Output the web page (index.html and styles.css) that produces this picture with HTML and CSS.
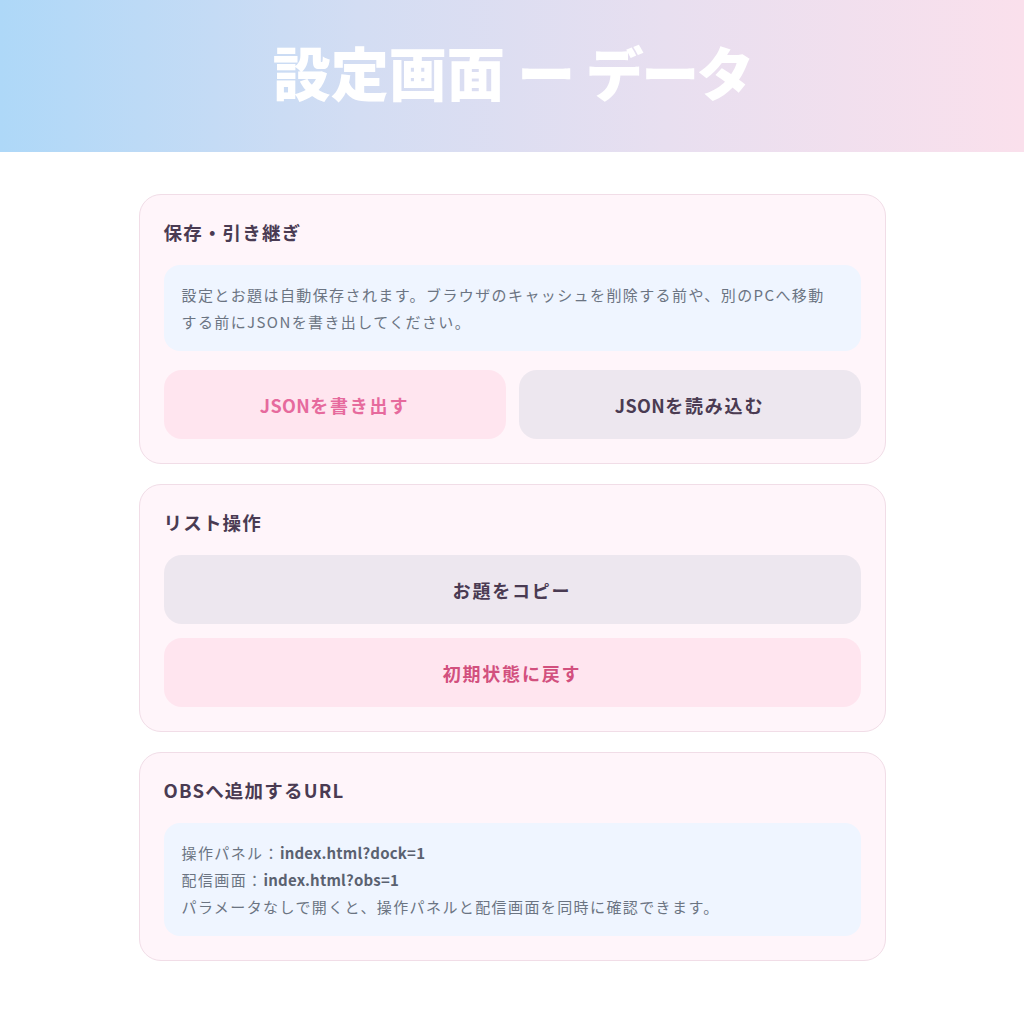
FILE: index.html
```html
<!DOCTYPE html>
<html lang="ja">
<head>
<meta charset="utf-8">
<title>設定画面 ー データ</title>
<link rel="stylesheet" href="styles.css">
</head>
<body>
<header class="hero">
  <h1 class="hero-title">設定画面 ー データ</h1>
</header>
<main class="content">
  <section class="card">
    <h2 class="card-title">保存・引き継ぎ</h2>
    <div class="info info-wrap">設定とお題は自動保存されます。ブラウザのキャッシュを削除する前や、別のPCへ移動する前にJSONを書き出してください。</div>
    <div class="btn-row">
      <button class="btn btn-pink"><span class="latin">JSON</span>を書き出す</button>
      <button class="btn btn-gray"><span class="latin">JSON</span>を読み込む</button>
    </div>
  </section>
  <section class="card">
    <h2 class="card-title">リスト操作</h2>
    <div class="btn-col">
      <button class="btn btn-gray">お題をコピー</button>
      <button class="btn btn-danger">初期状態に戻す</button>
    </div>
  </section>
  <section class="card">
    <h2 class="card-title">OBSへ追加するURL</h2>
    <div class="info">
      <div>操作パネル：<b>index.html?dock=1</b></div>
      <div>配信画面：<b>index.html?obs=1</b></div>
      <div>パラメータなしで開くと、操作パネルと配信画面を同時に確認できます。</div>
    </div>
  </section>
</main>
</body>
</html>
```

FILE: styles.css
```css
* { box-sizing: border-box; }
html, body { margin: 0; padding: 0; background: #ffffff; }
body {
  font-family: "Noto Sans CJK JP", "Noto Sans", sans-serif;
  color: #4a3b52;
}
.hero {
  height: 152px;
  background: linear-gradient(90deg, #aed8f8 0%, #d3ddf3 35%, #e8dff0 65%, #fae0ec 100%);
  display: flex;
  align-items: center;
  justify-content: center;
}
.hero-title {
  margin: 0;
  color: #ffffff;
  font-size: 58px;
  font-weight: 900;
  line-height: 1;
  font-feature-settings: "palt";
  transform: translateY(-5px);
}
.content {
  width: 747px;
  margin: 42px auto 0;
  display: flex;
  flex-direction: column;
  gap: 20px;
  padding-bottom: 40px;
}
.card {
  background: #fff5fa;
  border: 1.5px solid #f1dde7;
  border-radius: 22px;
  padding: 24px 24px 24px;
}
.card-title {
  margin: 0 0 20px;
  font-size: 18.5px;
  font-weight: 700;
  letter-spacing: 1.2px;
  line-height: 26px;
  color: #4a3b52;
}
.info {
  background: #eff5ff;
  border-radius: 16px;
  padding: 16px 18px;
  font-size: 15px;
  letter-spacing: 1.4px;
  line-height: 27px;
  color: #6b7482;
}
.info-wrap { padding-right: 24px; }
.info b { font-weight: 700; color: #5a6170; letter-spacing: 0.2px; }
.btn-row {
  display: grid;
  grid-template-columns: 1fr 1fr;
  gap: 13px;
  margin-top: 19px;
}
.btn-col {
  display: flex;
  flex-direction: column;
  gap: 14px;
}
.btn {
  font-family: inherit;
  border: none;
  border-radius: 18px;
  height: 69px;
  font-size: 18px;
  letter-spacing: 1.8px;
  font-weight: 700;
  cursor: pointer;
}
.btn .latin { letter-spacing: 0.4px; }
.btn-pink { background: #ffe5ef; color: #e66a9d; }
.btn-gray { background: #ede7ef; color: #4a3b52; }
.btn-danger { background: #ffe5ef; color: #d2507e; }
```
